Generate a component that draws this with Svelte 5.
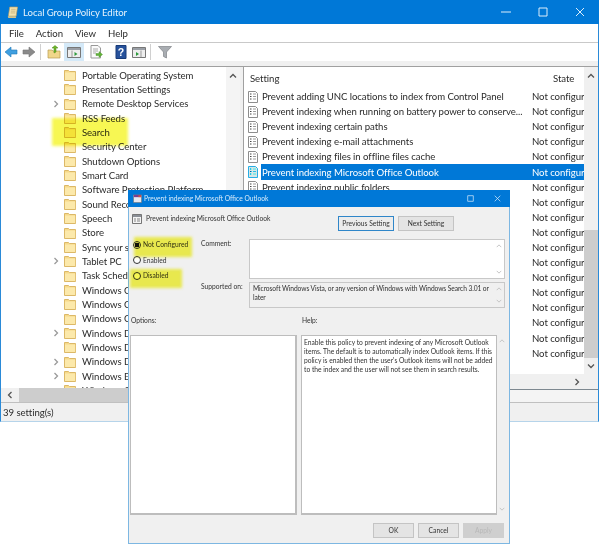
<script lang="ts">
	const treeItems = [
		{ name: 'Portable Operating System' },
		{ name: 'Presentation Settings' },
		{ name: 'Remote Desktop Services', more: true },
		{ name: 'RSS Feeds' },
		{ name: 'Search' },
		{ name: 'Security Center' },
		{ name: 'Shutdown Options' },
		{ name: 'Smart Card' },
		{ name: 'Software Protection Platform' },
		{ name: 'Sound Recording' },
		{ name: 'Speech' },
		{ name: 'Store' },
		{ name: 'Sync your settings' },
		{ name: 'Tablet PC', more: true },
		{ name: 'Task Scheduler' },
		{ name: 'Windows Calendar' },
		{ name: 'Windows Color System' },
		{ name: 'Windows Customer Experience' },
		{ name: 'Windows Defender Antivirus', more: true },
		{ name: 'Windows Defender Exploit Guard' },
		{ name: 'Windows Defender SmartScreen', more: true },
		{ name: 'Windows Error Reporting', more: true },
		{ name: 'Windows Game Recording' }
	];

	const settings = [
		'Prevent adding UNC locations to index from Control Panel',
		'Prevent indexing when running on battery power to conserve...',
		'Prevent indexing certain paths',
		'Prevent indexing e-mail attachments',
		'Prevent indexing files in offline files cache',
		'Prevent indexing Microsoft Office Outlook',
		'Prevent indexing public folders',
		'Enable indexing of online delegate mailboxes',
		'Enable indexing uncached Exchange folders',
		'Prevent clients from querying the index remotely',
		'Prevent customization of indexed locations',
		'Prevent the display of advanced indexing options in the C...',
		'Prevent unwanted iFilters and protocol handlers',
		'Prevent users from adding file types to index',
		'Stop indexing in the event of limited hard drive space',
		'Set the threshold for low disk space',
		'Set large or small index',
		'Set indexing schedule'
	];

	const SELECTED = 5;
</script>

{#snippet folder()}
	<svg class="folder" viewBox="0 0 12 12" aria-hidden="true">
		<path d="M.5 1.5h4l1 1h6v9H.5z" fill="#f6d98a" stroke="#dcb867" />
		<path d="M1 3.5h10.2V11H1z" fill="#fce9ab" />
	</svg>
{/snippet}

{#snippet doc()}
	<svg class="doc" viewBox="0 0 10 12" aria-hidden="true">
		<path d="M.5.5h7l2 2v9H.5z" fill="#fff" stroke="#8d8d8d" />
		<path d="M2 3h1.5M2 5.5h1.5M2 8h1.5" stroke="#444" />
		<path d="M5 3h3M5 5.5h3M5 8h3" stroke="#9a9a9a" />
	</svg>
{/snippet}

{#snippet arrow(dir)}
	<svg class="arrow" viewBox="0 0 8 8" aria-hidden="true">
		{#if dir === 'up'}<path d="M1 5.5 4 2.5l3 3" />{/if}
		{#if dir === 'down'}<path d="M1 2.5 4 5.5l3-3" />{/if}
		{#if dir === 'left'}<path d="M5.5 1 2.5 4l3 3" />{/if}
		{#if dir === 'right'}<path d="M2.5 1 5.5 4l-3 3" />{/if}
	</svg>
{/snippet}

<div class="window">
	<header class="titlebar">
		<svg class="app-icon" viewBox="0 0 12 13" aria-hidden="true">
			<path d="M3 .5h8.5L10 10.5H1.5z" fill="#f3e3b0" stroke="#b39b62" stroke-width=".7" />
			<path d="M.8 10.5h8.6l.6 2H1.5z" fill="#d9c48a" />
			<path d="M4.5 3h5M4.2 5h5M4 7h5" stroke="#b39b62" stroke-width=".6" />
		</svg>
		<span class="title">Local Group Policy Editor</span>
		<div class="controls">
			<svg viewBox="0 0 10 10" aria-hidden="true"><path d="M0 5h10" /></svg>
			<svg viewBox="0 0 10 10" aria-hidden="true"><path d="M1 1h8v8H1z" /></svg>
			<svg viewBox="0 0 10 10" aria-hidden="true"><path d="M1 1l8 8M9 1l-8 8" /></svg>
		</div>
	</header>

	<nav class="menubar">
		<span>File</span>
		<span>Action</span>
		<span>View</span>
		<span>Help</span>
	</nav>

	<div class="toolbar">
		<button class="tool" aria-label="Back">
			<svg viewBox="0 0 14 14"><path d="M1 7l6-5v3h6v4H7v3z" fill="#3f9fe0" stroke="#1e78b8" stroke-width=".6" /></svg>
		</button>
		<button class="tool" aria-label="Forward">
			<svg viewBox="0 0 14 14"><path d="M13 7L7 2v3H1v4h6v3z" fill="#8a8a8a" stroke="#767676" stroke-width=".6" /></svg>
		</button>
		<i class="sep"></i>
		<button class="tool" aria-label="Up one level">
			<svg viewBox="0 0 14 14">
				<path d="M1 5h4l1 1h7v7H1z" fill="#f0d68a" stroke="#b89b50" stroke-width=".7" />
				<path d="M7 8V3H5l3-2.5L11 3H9v4z" fill="#6fb52c" stroke="#4c8a17" stroke-width=".5" />
			</svg>
		</button>
		<button class="tool active" aria-label="Show or hide console tree">
			<svg viewBox="0 0 14 14">
				<path d="M.5 2.5h13v10H.5z" fill="#eee" stroke="#777" />
				<path d="M1 3h12v2H1z" fill="#9a9fa6" />
				<path d="M5 5.5V12" stroke="#999" />
				<path d="M7.5 7l3 2-3 2z" fill="#2d9a3c" />
			</svg>
		</button>
		<button class="tool export" aria-label="Export list">
			<svg viewBox="0 0 14 14">
				<path d="M2 .5h7L11.5 3v10H2z" fill="#fbfbfb" stroke="#999" />
				<path d="M4 4h5M4 6h5M4 8h3" stroke="#aaa" />
				<path d="M7 8.5h3v-2l3.5 3-3.5 3v-2H7z" fill="#63b33a" stroke="#3f8a1f" stroke-width=".4" />
			</svg>
		</button>
		<i class="gap"></i>
		<button class="tool" aria-label="Help">
			<svg viewBox="0 0 14 14">
				<path d="M2 .5h10v13H2z" fill="#27529c" stroke="#183b78" />
				<text x="7" y="11" font-size="10.5" font-weight="700" text-anchor="middle" fill="#fff" font-family="Liberation Sans">?</text>
			</svg>
		</button>
		<button class="tool" aria-label="Show or hide action pane">
			<svg viewBox="0 0 14 14">
				<path d="M.5 2.5h13v10H.5z" fill="#eee" stroke="#777" />
				<path d="M1 3h12v2H1z" fill="#9a9fa6" />
				<path d="M9 5.5V12" stroke="#999" />
				<path d="M4 7l3 2-3 2z" fill="#2d9a3c" />
			</svg>
		</button>
		<i class="sep wide"></i>
		<button class="tool" aria-label="Filter">
			<svg viewBox="0 0 14 14"><path d="M.5 1.5h13L8.5 7v6l-3-1.5V7z" fill="#a9adb2" stroke="#7f8388" stroke-width=".7" /></svg>
		</button>
	</div>

	<div class="workspace">
		<section class="left">
			<div class="tree-wrap">
				<ul class="tree">
					{#each treeItems as item}
						<li>
							<span class="chev">{#if item.more}{@render arrow('right')}{/if}</span>
							{@render folder()}
							<span class="name">{item.name}</span>
						</li>
					{/each}
				</ul>
				<div class="vbar tree-bar">{@render arrow('up')}</div>
			</div>
			<div class="hbar">
				{@render arrow('left')}
				<div class="hthumb"></div>
			</div>
		</section>

		<section class="right">
			<div class="list-pane">
				<div class="list">
					<div class="list-head">
						<span class="head-setting">Setting</span>
						<span class="head-state">State</span>
					</div>
					{#each settings as setting, i}
						<div class="row" class:selected={i === SELECTED}>
							<span class="doc-cell">{@render doc()}</span>
							<span class="col-setting">{setting}</span>
							<span class="col-state">Not configured</span>
						</div>
					{/each}
					<div class="list-hbar">{@render arrow('right')}</div>
				</div>
				<div class="vbar list-bar">
					{@render arrow('up')}
					<div class="vthumb"></div>
					{@render arrow('down')}
				</div>
			</div>
			<div class="tabs"></div>
		</section>
	</div>

	<footer class="status">39 setting(s)</footer>
</div>

<i class="mark mark-search"></i>

<div class="dialog">
	<header class="dlg-title">
		<svg class="dlg-icon" viewBox="0 0 10 10" aria-hidden="true">
			<path d="M.5 1h9v8.5h-9z" fill="#e8e8ef" stroke="#666" stroke-width=".6" />
			<path d="M1 1h8v2.5H1z" fill="#7b3f8f" />
			<path d="M6 1.5h3v2H6z" fill="#d8503c" />
		</svg>
		<span>Prevent indexing Microsoft Office Outlook</span>
		<div class="dlg-controls">
			<svg viewBox="0 0 10 10" aria-hidden="true"><path d="M1 1h8v8H1z" /></svg>
			<svg viewBox="0 0 10 10" aria-hidden="true"><path d="M1 1l8 8M9 1l-8 8" /></svg>
		</div>
	</header>

	<div class="dlg-head">
		<div class="dlg-id">
			<svg class="dlg-doc" viewBox="0 0 10 10" aria-hidden="true">
				<path d="M.5.5h9v9h-9z" fill="#f4f4f4" stroke="#555" stroke-width=".8" />
				<path d="M1 1h8v2H1z" fill="#8a8f96" />
				<path d="M2 5h2M2 7h2M5 5h3M5 7h3" stroke="#555" stroke-width=".7" />
			</svg>
			<span>Prevent indexing Microsoft Office Outlook</span>
		</div>
		<button class="btn focus">Previous Setting</button>
		<button class="btn next">Next Setting</button>
	</div>

	<div class="dlg-settings">
		<div class="radios">
			<div class="radio"><i class="dot checked"></i>Not Configured</div>
			<div class="radio"><i class="dot"></i>Enabled</div>
			<div class="radio"><i class="dot"></i>Disabled</div>
		</div>
		<div class="fields">
			<span class="field-label">Comment:</span>
			<div class="box comment">
				<div class="mini-scroll">{@render arrow('up')}{@render arrow('down')}</div>
			</div>
			<span class="field-label">Supported on:</span>
			<div class="box supported">
				<p>Microsoft Windows Vista, or any version of Windows with Windows Search 3.01 or<br />later</p>
				<div class="mini-scroll">{@render arrow('up')}{@render arrow('down')}</div>
			</div>
		</div>
	</div>

	<div class="dlg-labels">
		<span class="options-label">Options:</span>
		<span>Help:</span>
	</div>

	<div class="dlg-panes">
		<div class="pane options"></div>
		<div class="pane help">
			Enable this policy to prevent indexing of any Microsoft Outlook<br />
			items. The default is to automatically index Outlook items. If this<br />
			policy is enabled then the user's Outlook items will not be added<br />
			to the index and the user will not see them in search results.
		</div>
		<div class="mini-scroll">{@render arrow('up')}{@render arrow('down')}</div>
	</div>

	<div class="dlg-foot">
		<button class="btn">OK</button>
		<button class="btn">Cancel</button>
		<button class="btn disabled">Apply</button>
	</div>

	<i class="mark mark-configured"></i>
	<i class="mark mark-disabled"></i>
</div>

<style>
	:global(body) {
		background: #fff;
		font-family: Lato, 'Open Sans', sans-serif;
		color: #2b2b2b;
	}

	.window {
		box-sizing: border-box;
		width: 599px;
		height: 422px;
		display: flex;
		flex-direction: column;
		border: 1px solid #2a8ad8;
		border-top: 0;
		border-bottom-color: #b6d4ea;
		background: #f0f0f0;
		font-size: 9.6px;
		letter-spacing: -0.06px;
	}

	.titlebar {
		flex: none;
		height: 24px;
		margin: 0 -1px;
		display: flex;
		align-items: center;
		padding-left: 7px;
		background: #0078d7;
		color: #e6f2fb;
	}

	.app-icon {
		width: 11px;
		height: 13px;
		margin-right: 5px;
	}

	.controls {
		margin-left: auto;
		margin-right: 14px;
		display: flex;
		gap: 27px;
	}

	.controls svg,
	.dlg-controls svg {
		width: 10px;
		height: 10px;
		fill: none;
		stroke: #dcedfa;
		stroke-width: 1;
	}

	.menubar {
		flex: none;
		height: 18px;
		display: flex;
		align-items: center;
		gap: 12px;
		padding-left: 8px;
		background: #fff;
		border-bottom: 1px solid #c9c9c9;
	}

	.toolbar {
		flex: none;
		height: 18px;
		display: flex;
		align-items: center;
		padding-left: 1px;
		background: #fff;
		border-bottom: 5px solid #f0f0f0;
	}

	.tool {
		flex: none;
		width: 18px;
		height: 18px;
		padding: 2px;
		border: 0;
		background: none;
	}

	.tool svg {
		display: block;
		width: 14px;
		height: 14px;
	}

	.tool.active {
		width: 20px;
		margin-left: 1px;
		padding: 2px 3px;
		background: #d4e9f8;
	}

	.tool.export {
		margin-left: 3px;
	}

	.sep {
		flex: none;
		width: 1px;
		height: 16px;
		margin: 0 4px 0 2px;
		background: #d0d0d0;
	}

	.sep.wide {
		margin-right: 5px;
	}

	.gap {
		flex: none;
		width: 7px;
	}

	.workspace {
		flex: 1;
		min-height: 0;
		display: grid;
		grid-template-columns: 239px 1fr;
		column-gap: 3px;
		border-top: 1px solid #a0a0a0;
		border-bottom: 1px solid #c0c0c0;
	}

	.left {
		display: flex;
		flex-direction: column;
		min-height: 0;
		min-width: 0;
		background: #fff;
		overflow: hidden;
	}

	.tree-wrap {
		flex: none;
		height: 321px;
		display: flex;
	}

	.tree {
		flex: 1;
		min-width: 0;
		margin: 0;
		padding: 1px 0 0;
		list-style: none;
		overflow: hidden;
	}

	.tree li {
		height: 14.33px;
		display: flex;
		align-items: center;
		white-space: nowrap;
	}

	.chev {
		flex: none;
		width: 8px;
		height: 8px;
		margin-left: 51px;
		margin-right: 4px;
		--arrow: #9a9a9a;
	}

	.folder {
		flex: none;
		width: 12px;
		height: 12px;
		margin-right: 6px;
	}

	.arrow {
		display: block;
		flex: none;
		width: 8px;
		height: 8px;
		fill: none;
		stroke: var(--arrow, #555);
		stroke-width: 1.3;
	}

	.vbar {
		flex: none;
		width: 14px;
		display: flex;
		flex-direction: column;
		align-items: center;
	}

	.tree-bar {
		padding-top: 5px;
		background: #f4f4f4;
	}

	.hbar {
		flex: 1;
		display: flex;
		align-items: center;
		gap: 5px;
		padding-left: 5px;
		background: #f0f0f0;
	}

	.hthumb {
		flex: 1;
		height: 100%;
		background: #cdcdcd;
	}

	.right {
		display: flex;
		flex-direction: column;
		min-width: 0;
		min-height: 0;
	}

	.list-pane {
		flex: none;
		height: 322px;
		display: flex;
		border-left: 1px solid #a0a0a0;
		border-bottom: 1px solid #7d8890;
		background: #fff;
	}

	.list {
		flex: 1;
		min-width: 0;
		display: flex;
		flex-direction: column;
		overflow: hidden;
	}

	.list-head {
		flex: none;
		height: 21px;
		padding-top: 1px;
		display: flex;
		align-items: center;
	}

	.head-setting {
		width: 309px;
		padding-left: 6px;
		box-sizing: border-box;
	}

	.col-setting {
		flex: none;
		box-sizing: border-box;
		width: 264px;
		padding-left: 1px;
		white-space: nowrap;
		overflow: hidden;
		text-overflow: ellipsis;
	}

	.row {
		flex: none;
		height: 15.1px;
		display: flex;
		align-items: center;
	}

	.doc-cell {
		flex: none;
		width: 17px;
		box-sizing: border-box;
		height: 100%;
		display: flex;
		align-items: center;
		background: #fff;
	}

	.doc {
		width: 10px;
		height: 12px;
		margin-left: 4px;
	}

	.col-state {
		margin-left: 7px;
		white-space: nowrap;
	}

	.row.selected {
		background: #0078d7;
		color: #fff;
	}

	.row.selected .doc {
		filter: sepia(1) hue-rotate(170deg) saturate(5) brightness(0.9);
	}

	.list-hbar {
		flex: none;
		margin-top: auto;
		height: 15px;
		display: flex;
		align-items: center;
		justify-content: flex-end;
		padding-right: 3px;
		background: #f0f0f0;
	}

	.list-bar {
		padding-top: 5px;
		background: #f0f0f0;
	}

	.vthumb {
		width: 100%;
		height: 128px;
		margin-top: 150px;
		margin-bottom: 4px;
		background: #cdcdcd;
	}

	.tabs {
		flex: 1;
		border-left: 1px solid #ddd;
		background: #f4f4f4;
	}

	.status {
		flex: none;
		height: 18px;
		display: flex;
		align-items: center;
		padding-left: 2px;
	}

	.mark {
		position: absolute;
		background: #f6f640;
		mix-blend-mode: multiply;
		filter: blur(1.5px);
		opacity: 0.9;
	}

	.mark-search {
		left: 52px;
		top: 118px;
		width: 76px;
		height: 28px;
	}

	.mark-configured {
		left: 5px;
		top: 47px;
		width: 58px;
		height: 20px;
	}

	.mark-disabled {
		left: 1px;
		top: 79px;
		width: 52px;
		height: 19px;
	}

	.dialog {
		position: absolute;
		left: 128px;
		top: 190px;
		box-sizing: border-box;
		width: 382px;
		height: 354px;
		display: flex;
		flex-direction: column;
		background: #f0f0f0;
		border: 1px solid #7db7e2;
		border-top: 0;
		font-size: 6.7px;
		line-height: 9px;
		color: #333;
	}

	.dlg-title {
		flex: none;
		height: 17px;
		margin: 0 -1px;
		display: flex;
		align-items: center;
		padding-left: 5px;
		background: #0078d7;
		color: #d9ecfa;
	}

	.dlg-icon {
		width: 9px;
		height: 9px;
		margin-right: 2px;
	}

	.dlg-controls {
		margin-left: auto;
		margin-right: 9px;
		display: flex;
		gap: 20px;
	}

	.dlg-controls svg {
		width: 7px;
		height: 7px;
	}

	.dlg-head {
		flex: none;
		height: 15px;
		margin-top: 9px;
		display: flex;
		align-items: center;
		padding-left: 3px;
		padding-right: 55px;
	}

	.dlg-id {
		display: flex;
		align-items: center;
		margin-right: auto;
		margin-bottom: 10px;
	}

	.dlg-doc {
		width: 10px;
		height: 10px;
		margin-right: 4px;
	}

	.btn {
		width: 41px;
		height: 15px;
		padding: 0;
		border: 1px solid #c4c4c4;
		background: #e4e4e4;
		font: inherit;
		color: #333;
	}

	.btn.focus {
		width: 56px;
		border: 1px solid #2f86c9;
		background: #ececec;
	}

	.btn.next {
		width: 56px;
		margin-left: 4px;
	}

	.btn.disabled {
		background: #cfcfcf;
		border-color: #cfcfcf;
		color: #b8b8b8;
	}

	.dlg-settings {
		flex: none;
		height: 77px;
		margin-top: 8px;
		display: flex;
		padding-left: 4px;
		padding-right: 4px;
	}

	.radios {
		flex: none;
		width: 68px;
		margin-top: -2px;
		display: flex;
		flex-direction: column;
	}

	.radio {
		flex: none;
		height: 15.5px;
		display: flex;
		align-items: center;
		white-space: nowrap;
	}

	.dot {
		box-sizing: border-box;
		width: 8px;
		height: 8px;
		margin-right: 2px;
		border: 1px solid #333;
		border-radius: 50%;
		background: #fff;
	}

	.dot.checked {
		background: radial-gradient(circle, #111 0 2.2px, #fff 2.6px);
	}

	.fields {
		flex: 1;
		display: grid;
		grid-template-columns: 48px 1fr;
		grid-template-rows: 40px 26px;
		row-gap: 3px;
	}

	.box {
		display: flex;
		border: 1px solid #c8c8c8;
	}

	.comment {
		background: #fff;
		justify-content: flex-end;
	}

	.supported {
		background: #f0f0f0;
	}

	.supported p {
		flex: 1;
		margin: 0;
		padding: 1px 2px 0 3px;
		letter-spacing: -0.1px;
		white-space: nowrap;
	}

	.mini-scroll {
		flex: none;
		width: 10px;
		display: flex;
		flex-direction: column;
		justify-content: space-between;
		align-items: center;
		padding: 3px 0;
		--arrow: #c4c4c4;
	}

	.mini-scroll :global(.arrow) {
		width: 6px;
		height: 6px;
	}

	.dlg-labels {
		flex: none;
		height: 10px;
		display: flex;
		padding-left: 2px;
	}

	.options-label {
		width: 171px;
	}

	.dlg-panes {
		flex: none;
		height: 180px;
		margin-top: 9px;
		display: flex;
		padding-left: 1px;
	}

	.pane {
		box-sizing: border-box;
		height: 100%;
		background: #fff;
		border: 1px solid #bdbdbd;
		border-bottom-width: 2px;
	}

	.pane.options {
		width: 167px;
		border-right-width: 2px;
	}

	.pane.help {
		width: 196px;
		margin-left: 4px;
		padding: 2px 2px;
		white-space: nowrap;
	}

	.dlg-foot {
		flex: none;
		margin-top: 8px;
		display: flex;
		justify-content: flex-end;
		gap: 4px;
		padding-right: 5px;
	}
</style>
